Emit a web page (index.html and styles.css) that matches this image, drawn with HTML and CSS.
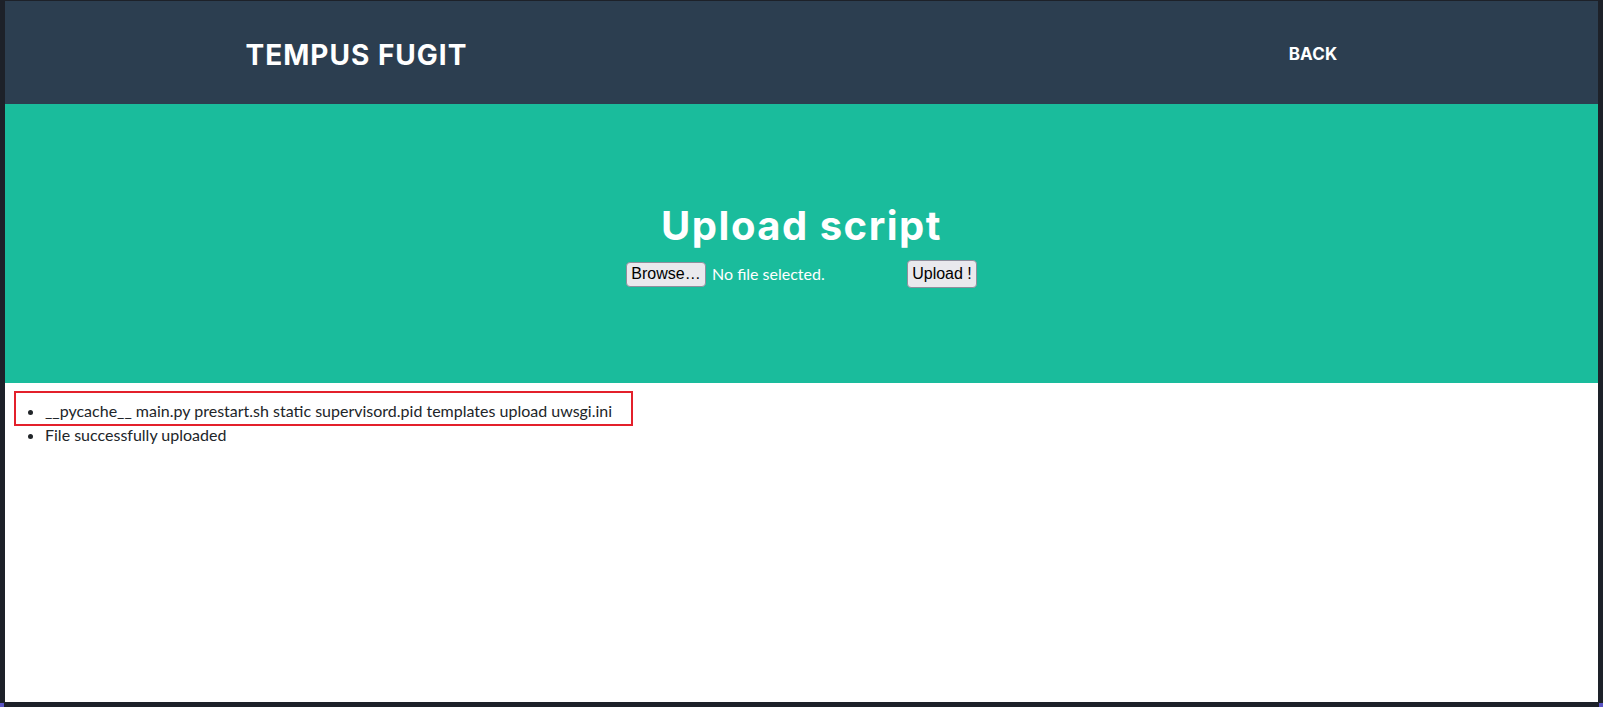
FILE: index.html
```html
<!DOCTYPE html>
<html lang="en">
<head>
<meta charset="utf-8">
<title>Tempus Fugit</title>
<link rel="stylesheet" href="styles.css">
</head>
<body>
<div class="frame">
  <div class="page">
    <header class="nav">
      <div class="container nav-inner">
        <a class="brand" href="#">TEMPUS FUGIT</a>
        <a class="nav-link" href="#">BACK</a>
      </div>
    </header>
    <section class="masthead">
      <h1 class="title">Upload script</h1>
      <form class="upload-form">
        <span class="file-input">
          <span class="btn btn-browse">Browse…</span>
          <span class="file-label">No file selected.</span>
        </span>
        <span class="btn btn-upload">Upload !</span>
      </form>
    </section>
    <ul class="messages">
      <li>__pycache__ main.py prestart.sh static supervisord.pid templates upload uwsgi.ini</li>
      <li>File successfully uploaded</li>
      <div class="highlight"></div>
    </ul>
  </div>
  <span class="corner corner-bl"></span>
  <span class="corner corner-br"></span>
</div>
</body>
</html>
```

FILE: styles.css
```css
html, body {
  margin: 0;
  padding: 0;
  height: 100%;
}
body {
  background: #1d2129;
  overflow: hidden;
}
.frame {
  position: relative;
  height: 707px;
  box-sizing: border-box;
  padding: 1px 5px 5px 5px;
}
.page {
  background: #ffffff;
  height: 701px;
  font-family: Lato, "Noto Sans", sans-serif;
  font-size: 16px;
  line-height: 1.5;
  color: #212529;
  overflow: hidden;
}
.nav {
  background: #2c3e50;
  height: 103px;
  box-sizing: border-box;
  padding-top: 4px;
  display: flex;
  align-items: center;
}
.container {
  width: 1110px;
  margin: 0 auto;
  padding: 0 15px;
}
.nav-inner {
  display: flex;
  justify-content: space-between;
  align-items: center;
  box-sizing: content-box;
}
.brand {
  font-family: Inter, "Open Sans", sans-serif;
  font-weight: 700;
  font-size: 28px;
  letter-spacing: 1px;
  color: #ffffff;
  text-decoration: none;
  margin-left: -1px;
}
.nav-link {
  font-family: Inter, "Open Sans", sans-serif;
  font-weight: 700;
  font-size: 17px;
  letter-spacing: 0.2px;
  color: #ffffff;
  text-decoration: none;
  margin-right: 19px;
}
.masthead {
  background: #1abc9c;
  height: 279px;
  display: flex;
  flex-direction: column;
  align-items: center;
  justify-content: center;
  color: #ffffff;
}
.title {
  margin: 0;
  font-family: Inter, "Open Sans", sans-serif;
  font-weight: 700;
  font-size: 40px;
  letter-spacing: 1.5px;
  line-height: 1.2;
  margin-top: 3px;
}
.upload-form {
  display: flex;
  align-items: center;
  gap: 4px;
  margin-top: 10px;
}
.file-input {
  display: flex;
  align-items: center;
  width: 277px;
}
.btn {
  display: inline-flex;
  align-items: center;
  justify-content: center;
  box-sizing: border-box;
  background: #e9e9ed;
  border: 1px solid #8f8f9d;
  border-radius: 4px;
  color: #000000;
  font-family: "Liberation Sans", Arial, sans-serif;
  font-size: 16px;
  line-height: 1;
}
.btn-browse {
  width: 80px;
  height: 25px;
}
.btn-upload {
  width: 70px;
  height: 28px;
}
.file-label {
  margin-left: 6px;
  font-size: 16px;
  color: #ffffff;
}
.messages {
  position: relative;
  margin: 16px 0 0 0;
  padding-left: 40px;
}
.highlight {
  position: absolute;
  left: 9px;
  top: -8px;
  width: 619px;
  height: 35px;
  box-sizing: border-box;
  border: 2px solid #e3202b;
}
.corner {
  position: absolute;
  bottom: 0;
  width: 4px;
  height: 4px;
  background: #5b55c4;
}
.corner-bl { left: 0; }
.corner-br { right: 0; }
```
